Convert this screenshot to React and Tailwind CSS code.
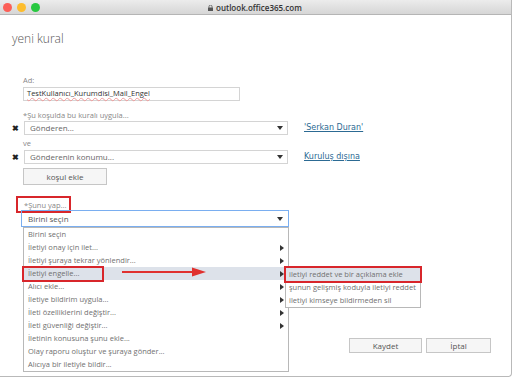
const actions = [
  { label: "Birini seçin", sub: false },
  { label: "İletiyi onay için ilet...", sub: true },
  { label: "İletiyi şuraya tekrar yönlendir...", sub: true },
  { label: "İletiyi engelle...", sub: true, active: true },
  { label: "Alıcı ekle...", sub: true },
  { label: "İletiye bildirim uygula...", sub: true },
  { label: "İleti özelliklerini değiştir...", sub: true },
  { label: "İleti güvenliği değiştir...", sub: true },
  { label: "İletinin konusuna şunu ekle...", sub: false },
  { label: "Olay raporu oluştur ve şuraya gönder...", sub: false },
  { label: "Alıcıya bir iletiyle bildir...", sub: false },
];

const blockItems = [
  "iletiyi reddet ve bir açıklama ekle",
  "şunun gelişmiş koduyla iletiyi reddet",
  "iletiyi kimseye bildirmeden sil",
];

function DownArrow() {
  return (
    <span className="w-0 h-0 border-x-[3px] border-x-transparent border-t-[4px] border-t-[#333]" />
  );
}

function RightArrow() {
  return (
    <span className="w-0 h-0 border-y-[3px] border-y-transparent border-l-[4px] border-l-[#333]" />
  );
}

function ConditionRow({ value, link }) {
  return (
    <div className="flex items-center h-[14px]">
      <span className="w-[24px] pl-[12px] text-[8px] font-bold text-[#222] leading-none">✖</span>
      <div className="w-[264px] h-[14px] border border-[#d4d4d4] flex items-center justify-between pl-[5px] pr-[4px]">
        <span className="text-[8px] text-[#666]">{value}</span>
        <DownArrow />
      </div>
      <a className="ml-[16px] text-[8px] font-normal text-[#2c6a93] underline font-['DejaVu_Sans',sans-serif]">{link}</a>
    </div>
  );
}

export default function App() {
  return (
    <div className="w-[513px] h-[378px] bg-white font-['Open_Sans',sans-serif] overflow-hidden">
      <div className="w-[512px] h-[377px] border-r border-b border-[#b9b9b9] rounded-br-[4px] flex flex-col">
        {/* title bar */}
        <div className="h-[15px] bg-gradient-to-b from-[#ececec] to-[#d6d6d6] border-b border-[#b5b5b5] flex items-center relative">
          <div className="flex gap-[5px] pl-[3px]">
            <span className="w-[9px] h-[9px] rounded-full bg-[#fc5f57]" />
            <span className="w-[9px] h-[9px] rounded-full bg-[#fdbd2e]" />
            <span className="w-[9px] h-[9px] rounded-full bg-[#28c840]" />
          </div>
          <div className="absolute left-[208px] top-0 h-[15px] flex items-center gap-[3px]">
            <svg width="5" height="6" viewBox="0 0 5 6">
              <rect x="0" y="2.5" width="5" height="3.5" fill="#555" />
              <path d="M1 2.6V1.6a1.5 1.5 0 0 1 3 0v1" stroke="#555" strokeWidth="0.8" fill="none" />
            </svg>
            <span className="text-[8px] font-semibold text-[#333] leading-none">outlook.office365.com</span>
          </div>
        </div>

        {/* content */}
        <div className="pl-[12px] pt-[16px]">
          <h1 className="text-[12px] font-light text-[#555] leading-[16px]">yeni kural</h1>
        </div>

        <div className="pl-[23px] pt-[28px] flex flex-col">
          <label className="text-[7.5px] text-[#888] leading-[10px] h-[12px]">Ad:</label>
          <div className="w-[217px] h-[14px] border border-[#d4d4d4] flex items-center pl-[3px]">
            <span className="text-[7.5px] text-[#333] underline decoration-wavy decoration-[#e99] decoration-[0.5px]">TestKullanıcı_Kurumdisi_Mail_Engel</span>
          </div>
          <div className="text-[7.5px] text-[#888] leading-[10px] mt-[9px] mb-[1px]">*Şu koşulda bu kuralı uygula...</div>
        </div>

        <div className="flex flex-col">
          <ConditionRow value="Gönderen..." link="'Serkan Duran'" />
          <div className="pl-[23px] text-[7.5px] text-[#888] h-[15px] leading-[16px]">ve</div>
          <ConditionRow value="Gönderenin konumu..." link="Kuruluş dışına" />
        </div>

        <div className="flex pl-[23px] pt-[4px]">
          <button className="w-[84px] h-[17px] border border-[#c6c6c6] bg-[#f6f6f6] text-[8px] text-[#555]">koşul ekle</button>
        </div>

        <div className="pl-[21px] pt-[15px] flex flex-col relative">
          <div className="pl-[3px] text-[7.5px] text-[#888] leading-[10px] h-[10px]">*Şunu yap...</div>
          {/* annotation around label */}
          <div className="absolute left-[16px] top-[11px] w-[55px] h-[17px] border-[2px] border-[#d8262b]" />

          <div className="relative w-[268px]">
            <div className="h-[17px] border border-[#7aaef0] flex items-center justify-between pl-[6px] pr-[5px]">
              <span className="text-[8px] text-[#555]">Birini seçin</span>
              <DownArrow />
            </div>

            {/* dropdown list */}
            <div className="absolute left-[2px] top-[17px] w-[266px] border border-[#b8b8b8] bg-white">
              {actions.map((a) => (
                <div
                  key={a.label}
                  className={`relative h-[13px] flex items-center justify-between pl-[4px] pr-[4px] ${a.active ? "bg-[#dde2ea]" : ""}`}
                >
                  <span className="text-[7.5px] text-[#707070] leading-none whitespace-nowrap">{a.label}</span>
                  {a.sub && <RightArrow />}
                  {a.active && (
                    <>
                      <div className="absolute left-[-2px] top-[-1px] w-[82px] h-[16px] border-[2px] border-[#d8262b]" />
                      <svg className="absolute left-[98px] top-[-1px]" width="86" height="12" viewBox="0 0 86 12">
                        <line x1="0" y1="6" x2="72" y2="6" stroke="#e0312f" strokeWidth="2" />
                        <polygon points="70,1.5 84,6 70,10.5" fill="#e0312f" />
                      </svg>
                      {/* submenu */}
                      <div className="absolute left-[261px] top-0 w-[136px] border border-[#b8b8b8] bg-white">
                        {blockItems.map((b, i) => (
                          <div
                            key={b}
                            className={`h-[13px] flex items-center pl-[3px] ${i === 0 ? "bg-[#dde2ea]" : ""}`}
                          >
                            <span className="text-[7.5px] text-[#707070] leading-none whitespace-nowrap">{b}</span>
                          </div>
                        ))}
                        <div className="absolute left-[-2px] top-[-2px] w-[138px] h-[17px] border-[2px] border-[#d8262b]" />
                      </div>
                    </>
                  )}
                </div>
              ))}
            </div>
          </div>
        </div>

        {/* footer buttons */}
        <div className="flex justify-end gap-[4px] pr-[20px] mt-[111px]">
          <button className="w-[73px] h-[15px] border border-[#c6c6c6] bg-[#f6f6f6] text-[8px] text-[#555]">Kaydet</button>
          <button className="w-[65px] h-[15px] border border-[#c6c6c6] bg-[#f6f6f6] text-[8px] text-[#555]">İptal</button>
        </div>
      </div>
    </div>
  );
}
